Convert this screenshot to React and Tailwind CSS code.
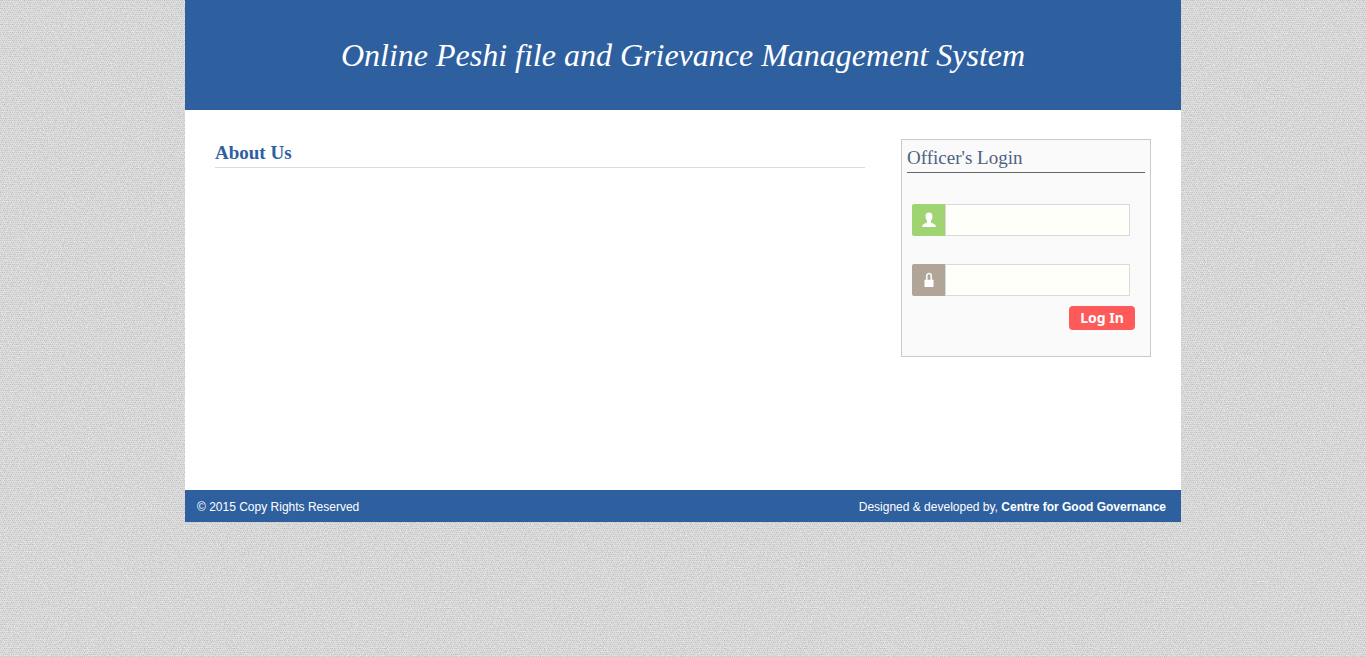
import React from "react";

function PaperTexture() {
  return (
    <svg aria-hidden="true" className="fixed inset-0 -z-10 h-full w-full">
      <defs>
        <filter id="grain" x="0" y="0" width="100%" height="100%" colorInterpolationFilters="sRGB">
          <feTurbulence type="fractalNoise" baseFrequency="0.7" numOctaves="3" seed="4" stitchTiles="stitch" />
          <feColorMatrix values="0.2 0 0 0 0.75  0.2 0 0 0 0.75  0.2 0 0 0 0.75  0 0 0 0 1" />
        </filter>
        <pattern id="weave" width="2" height="4" patternUnits="userSpaceOnUse">
          <path d="M0 0h1v1H0zM1 2h1v1H1z" fill="#000" fillOpacity="0.08" />
          <path d="M0 1h2v1H0zM0 3h2v1H0z" fill="#fff" fillOpacity="0.1" />
        </pattern>
      </defs>
      <rect width="100%" height="100%" fill="#d7d7d7" />
      <rect width="100%" height="100%" filter="url(#grain)" />
      <rect width="100%" height="100%" fill="url(#weave)" />
    </svg>
  );
}

function UserIcon() {
  return (
    <svg viewBox="0 0 14 16" className="h-4 w-3.5" fill="#fff" aria-hidden="true">
      <path d="M7 .5C4.500.5 3.500 2 3.500 4.200c0 2 .6 3.300 1.500 4.200v1.800C4.900 11.300.900 11.600.300 13.700V15h13.400v-1.300C13.100 11.600 9.100 11.300 9 10.200V8.400c.9-.9 1.500-2.200 1.500-4.200C10.500 2 9.500.5 7 .5z" />
    </svg>
  );
}

function LockIcon() {
  return (
    <svg viewBox="0 0 14 16" className="h-4 w-3.5" aria-hidden="true">
      <path d="M4.750 8.500V4a2.250 2.500 0 0 1 4.500 0V8.500" fill="none" stroke="#fff" strokeOpacity="0.9" strokeWidth="1.700" />
      <rect x="2.500" y="7.800" width="9" height="7.200" rx="0.500" fill="#fff" />
    </svg>
  );
}

function Field({ id, label, type, color, icon }) {
  return (
    <div className="flex h-8">
      <label htmlFor={id} aria-label={label} className={`flex w-[34px] shrink-0 items-center justify-center rounded-l-xs border-r border-[#d9dade] ${color}`}>
        {icon}
      </label>
      <input id={id} name={id} type={type} className="min-w-0 flex-1 border border-l-0 border-[#d9dade] bg-[#fefff8] px-2 text-sm outline-none" />
    </div>
  );
}

export default function App() {
  return (
    <div className="relative isolate min-h-screen">
      <PaperTexture />
      <div className="mx-auto max-w-[996px] bg-white">
        <header className="bg-[#2e60a0] px-4 pt-9 pb-9 text-center">
          <h1 className="font-['Liberation_Serif',serif] text-[32px] leading-[38px] text-white italic">
            Online Peshi file and Grievance Management System
          </h1>
        </header>
        <main className="flex min-h-[380px] items-start gap-9 px-[30px] pt-[29px] pb-8 font-['Liberation_Serif',serif]">
          <section className="flex-1">
            <h2 className="border-b border-[#dadbe5] pt-[3px] pb-[3px] text-[19px] leading-[22px] font-bold text-[#2e60a0]">About Us</h2>
          </section>
          <aside className="w-[250px] border border-[#cacaca] bg-[#fafafa] px-[5px] pt-[7px] pb-[26px]">
            <h2 className="border-b border-[#666] pb-[3px] text-[19px] leading-[22px] text-[#4e6280]">Officer's Login</h2>
            <form className="flex flex-col pt-[31px] pr-[15px] pl-[5px]" onSubmit={(e) => e.preventDefault()}>
              <div className="flex flex-col gap-7">
                <Field id="username" label="User name" type="text" color="bg-[#a0d472]" icon={<UserIcon />} />
                <Field id="password" label="Password" type="password" color="bg-[#b1a597]" icon={<LockIcon />} />
              </div>
              <button type="submit" className="-mr-[5px] mt-2.5 h-6 w-[66px] self-end rounded-sm bg-[#ff5a5a] font-['Noto_Sans',sans-serif] text-sm leading-6 font-bold text-white">
                Log In
              </button>
            </form>
          </aside>
        </main>
        <footer className="flex items-center justify-between bg-[#2e60a0] pt-[9px] pr-[15px] pb-[7px] pl-3 font-['Liberation_Sans',sans-serif] text-xs text-white">
          <p>© 2015 Copy Rights Reserved</p>
          <p>
            Designed &amp; developed by, <a href="#" className="font-bold">Centre for Good Governance</a>
          </p>
        </footer>
      </div>
    </div>
  );
}
